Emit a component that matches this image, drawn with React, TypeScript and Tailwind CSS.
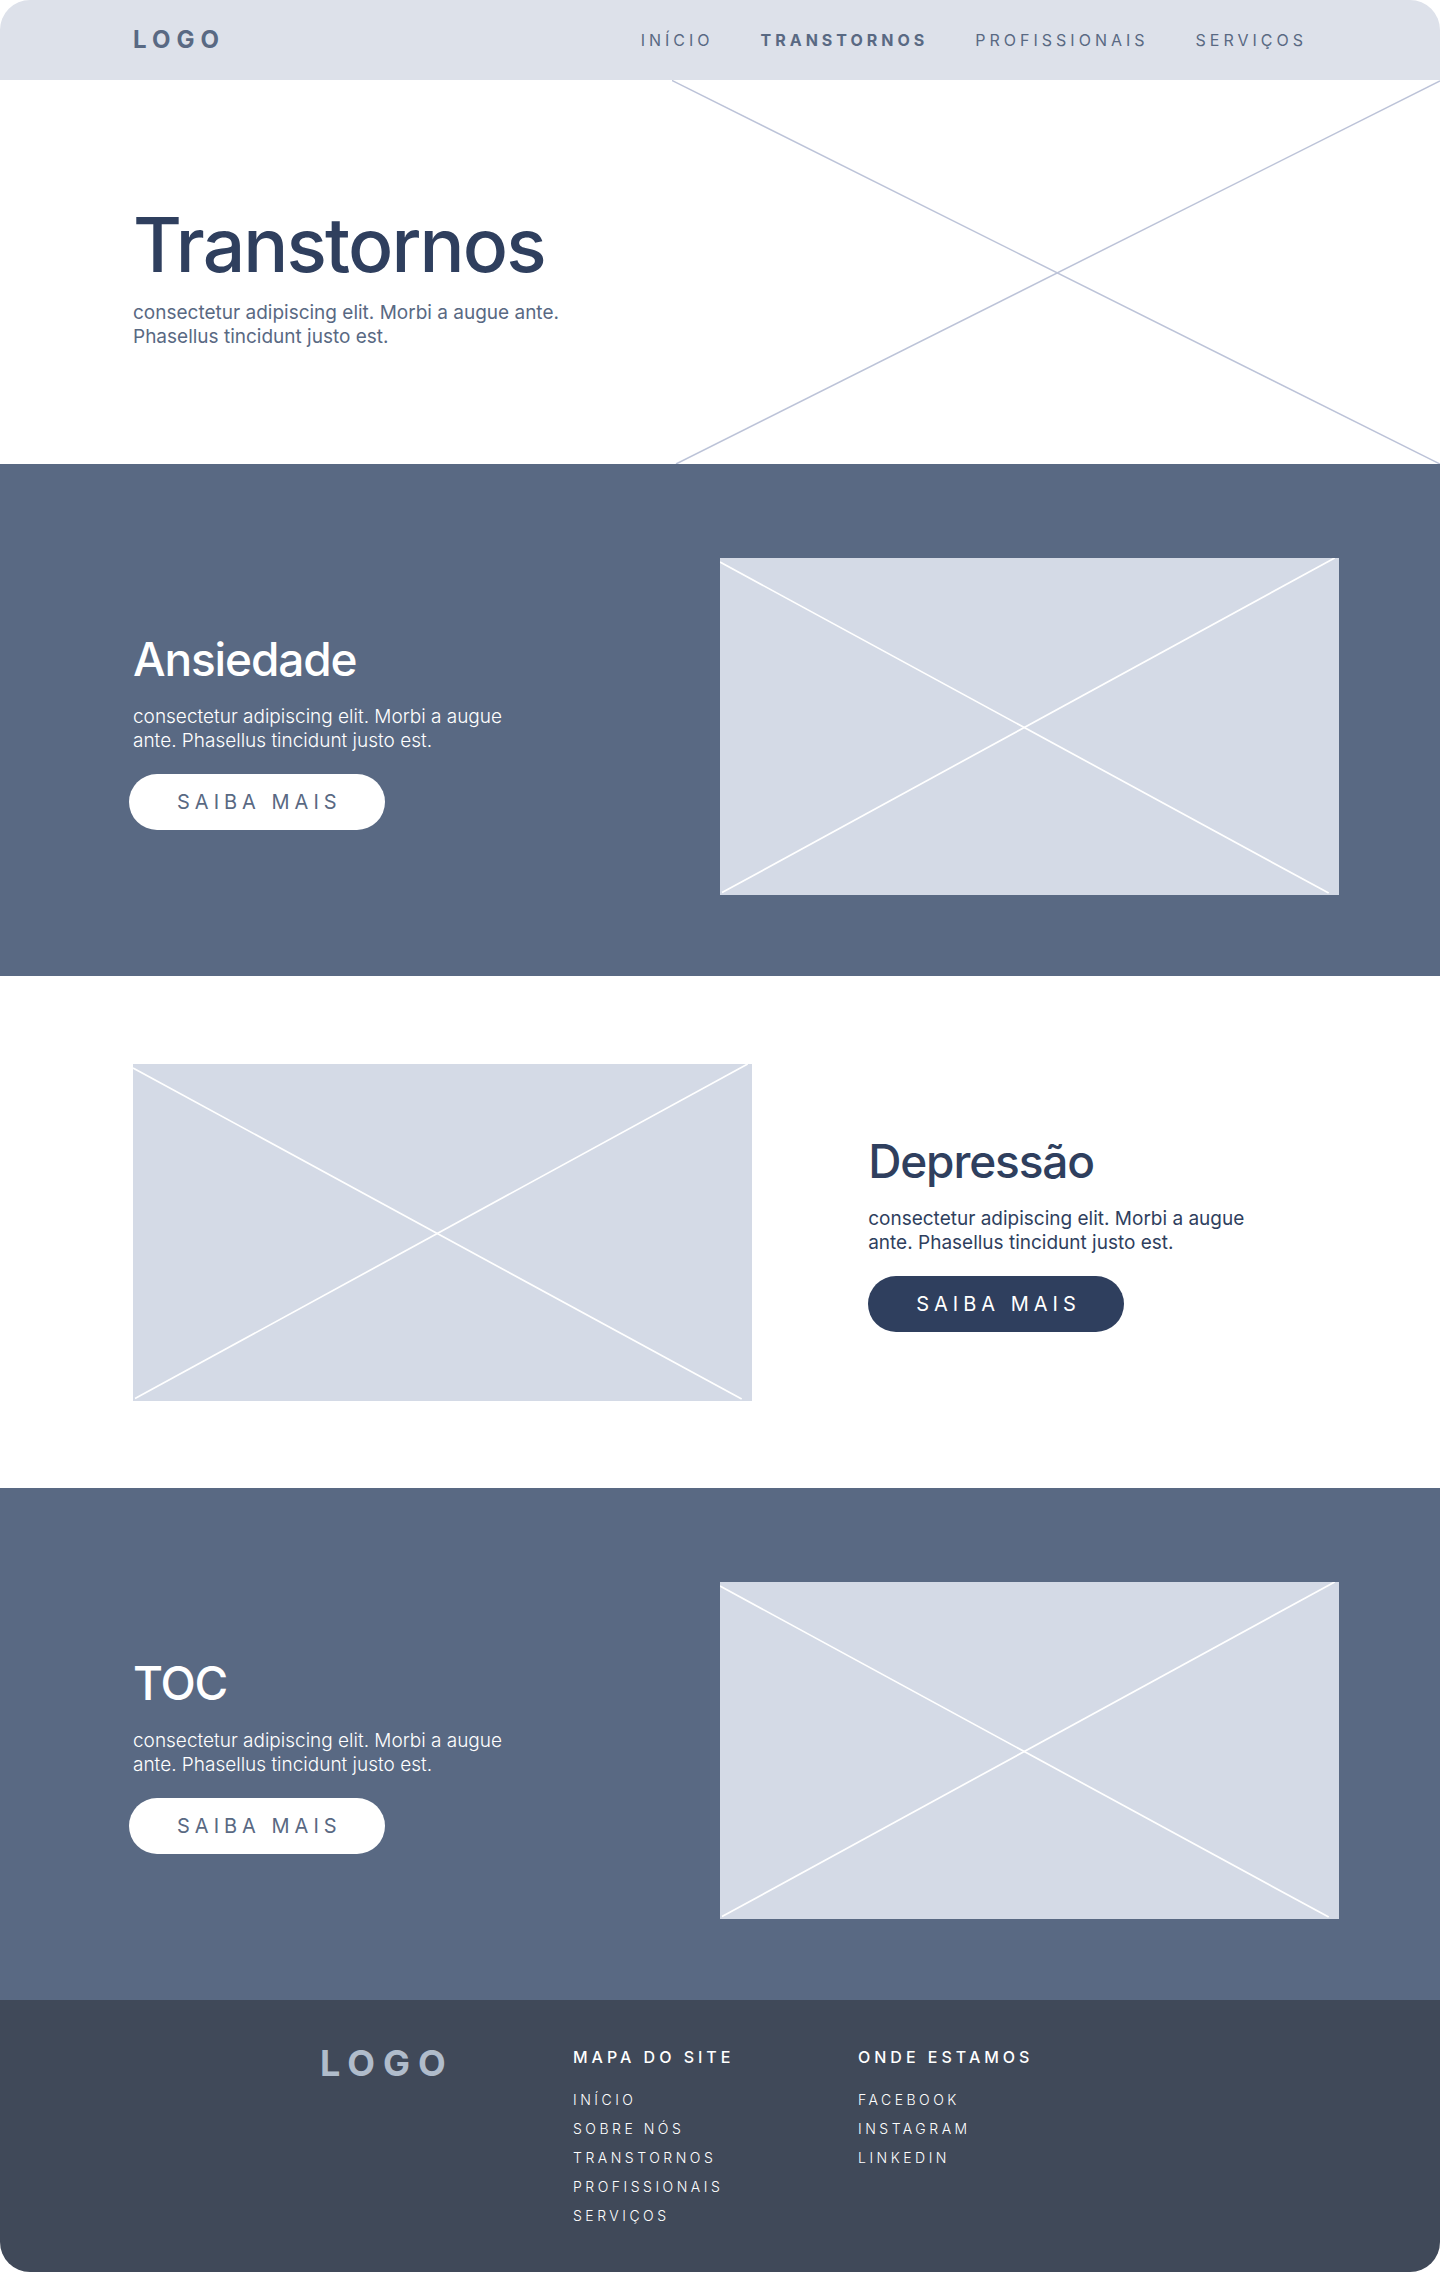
const BODY_TEXT = 'consectetur adipiscing elit. Morbi a augue ante. Phasellus tincidunt justo est.';

const NAV_LINKS = [
  { label: 'INÍCIO', href: '#inicio', active: false },
  { label: 'TRANSTORNOS', href: '#transtornos', active: true },
  { label: 'PROFISSIONAIS', href: '#profissionais', active: false },
  { label: 'SERVIÇOS', href: '#servicos', active: false },
];

const SITE_MAP = ['INÍCIO', 'SOBRE NÓS', 'TRANSTORNOS', 'PROFISSIONAIS', 'SERVIÇOS'];
const SOCIAL = ['FACEBOOK', 'INSTAGRAM', 'LINKEDIN'];

function ImagePlaceholder({ className }: { className: string }) {
  return (
    <svg
      viewBox="0 0 619 337"
      className={`h-auto w-[43%] shrink-0 bg-[#d4dae6] ${className}`}
      fill="none"
      stroke="#ffffff"
      strokeWidth="1.7"
      role="img"
      aria-label="Imagem"
    >
      <path d="M0 4L608.5 335" />
      <path d="M2 334.5L614.5 0" />
    </svg>
  );
}

function HeroPlaceholder() {
  return (
    <svg
      viewBox="0 0 768 384"
      className="h-auto w-8/15 shrink-0"
      fill="none"
      stroke="#bcc3d8"
      strokeWidth="1.5"
      role="img"
      aria-label="Imagem de destaque"
    >
      <path d="M0 0.5L768 384" />
      <path d="M4 384L768 1" />
    </svg>
  );
}

function DarkTopic({ title }: { title: string }) {
  return (
    <section className="flex items-start bg-[#596983] pt-[94px] pb-[81px] text-white">
      <div className="flex-1 pt-[73px] pl-[133px]">
        <h2 className="text-[46px] leading-14 font-medium tracking-tight">{title}</h2>
        <p className="mt-[18px] max-w-[400px] text-[19px] leading-6 font-light">{BODY_TEXT}</p>
        <button
          type="button"
          className="mt-[21px] -ml-1 h-14 w-64 rounded-full bg-white pl-12 text-left text-xl tracking-[0.25em] text-[#596983]"
        >
          SAIBA MAIS
        </button>
      </div>
      <ImagePlaceholder className="mr-[101px]" />
    </section>
  );
}

function LightTopic({ title }: { title: string }) {
  return (
    <section className="flex items-start bg-white pt-[88px] pb-[87px] text-[#2f3f5e]">
      <ImagePlaceholder className="ml-[133px]" />
      <div className="flex-1 pt-[69px] pl-[116px]">
        <h2 className="text-[46px] leading-14 font-medium tracking-tight">{title}</h2>
        <p className="mt-[18px] max-w-[400px] text-[19px] leading-6">{BODY_TEXT}</p>
        <button
          type="button"
          className="mt-[21px] h-14 w-64 rounded-full bg-[#2f3f5e] pl-12 text-left text-xl tracking-[0.25em] text-white"
        >
          SAIBA MAIS
        </button>
      </div>
    </section>
  );
}

function FooterList({ title, items }: { title: string; items: string[] }) {
  return (
    <nav aria-label={title}>
      <h3 className="text-base leading-[26px] font-medium tracking-[0.25em]">{title}</h3>
      <ul className="mt-[15px]">
        {items.map((item) => (
          <li key={item} className="text-sm leading-[29px] font-light tracking-[0.25em]">
            <a href="#">{item}</a>
          </li>
        ))}
      </ul>
    </nav>
  );
}

export default function App() {
  return (
    <div className="overflow-hidden rounded-[30px] bg-white font-['Inter','Liberation_Sans',sans-serif]">
      <header className="flex h-20 items-center justify-between bg-[#dde1ea] pr-[133px] pl-[133px] text-[#596983]">
        <a href="#" className="text-2xl font-bold tracking-[0.25em]">
          LOGO
        </a>
        <nav className="flex gap-[47px] text-base tracking-[0.25em]">
          {NAV_LINKS.map((link) => (
            <a key={link.label} href={link.href} className={link.active ? 'font-bold' : 'font-normal'}>
              {link.label}
            </a>
          ))}
        </nav>
      </header>

      <main>
        <section className="flex items-start justify-between">
          <div className="pt-[125px] pl-[133px]">
            <h1 className="text-[75px] leading-20 font-medium tracking-tight text-[#2f3f5e]">Transtornos</h1>
            <p className="mt-4 max-w-[440px] text-[19px] leading-6 text-[#596983]">{BODY_TEXT}</p>
          </div>
          <HeroPlaceholder />
        </section>
        <DarkTopic title="Ansiedade" />
        <LightTopic title="Depressão" />
        <DarkTopic title="TOC" />
      </main>

      <footer className="grid grid-cols-[253px_285px_1fr] bg-[#404959] pt-11 pb-[42px] pl-80 text-white">
        <div className="text-4xl leading-[38px] font-bold tracking-[8px] text-[#b0bccb]">LOGO</div>
        <FooterList title="MAPA DO SITE" items={SITE_MAP} />
        <FooterList title="ONDE ESTAMOS" items={SOCIAL} />
      </footer>
    </div>
  );
}
